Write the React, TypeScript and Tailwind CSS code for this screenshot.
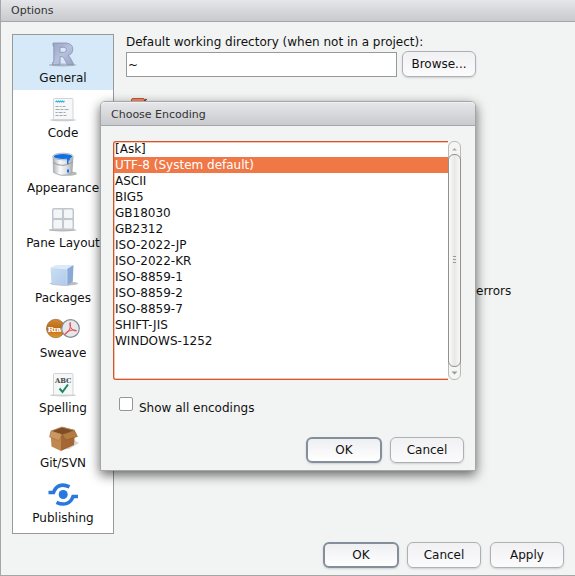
import React from "react";

function RIcon() {
  return (
    <svg width="28" height="28" viewBox="0 0 28 28">
      <defs>
        <linearGradient id="rg" x1="0" y1="0" x2="1" y2="1">
          <stop offset="0" stopColor="#98a5c3" />
          <stop offset="0.5" stopColor="#b8c0dc" />
          <stop offset="1" stopColor="#96a3c4" />
        </linearGradient>
      </defs>
      <ellipse cx="13.500" cy="25" rx="14" ry="1.400" fill="#8b98a8" opacity="0.6" />
      <path
        fillRule="evenodd"
        d="M4 3H16C21 3 23.800 5.300 23.800 9.300C23.800 12.500 22 14.600 19 15.500C20 16 20.700 16.900 21.300 18L25 24.800H18.500L15.300 18.600C14.600 17.200 13.900 16.700 12.500 16.700H11V24.800H3.500V22.500H4.800V6H4ZM11 7.300V12.300H14.500C16.500 12.300 17.300 11.400 17.300 9.700C17.300 8.100 16.500 7.300 14.500 7.300Z"
        fill="url(#rg)"
        stroke="#8390ae"
        strokeWidth="0.8"
      />
    </svg>
  );
}

function CodeIcon() {
  return (
    <svg width="28" height="28" viewBox="0 0 28 28">
      <ellipse cx="14" cy="25" rx="13" ry="1.300" fill="#999" opacity="0.5" />
      <rect x="4.500" y="3.500" width="19.500" height="21" rx="1" fill="#f6f7f8" stroke="#d2d5d8" />
      <path d="M6.500 7l1-1 1 1 1-1 1 1 1-1 1 1 1-1 1 1 1-1" fill="none" stroke="#2eb5df" strokeWidth="1.100" />
      <g stroke="#a5a9ad" strokeWidth="1.100">
        <path d="M6.500 11.500h11" strokeDasharray="3 1 2 1" />
        <path d="M6.500 14.500h13" strokeDasharray="4 1 3 1" />
        <path d="M6.500 17.500h11" strokeDasharray="2 1 4 1" />
        <path d="M6.500 20.500h12" strokeDasharray="3 1 3 1" />
      </g>
    </svg>
  );
}

function BucketIcon() {
  return (
    <svg width="28" height="28" viewBox="0 0 28 28">
      <defs>
        <linearGradient id="bk">
          <stop offset="0" stopColor="#aeb2b5" />
          <stop offset="0.35" stopColor="#fbfbfb" />
          <stop offset="0.7" stopColor="#d9dcde" />
          <stop offset="1" stopColor="#a7abae" />
        </linearGradient>
      </defs>
      <ellipse cx="18" cy="23.500" rx="10" ry="2.300" fill="#888" opacity="0.6" />
      <path d="M4 6.500L4.500 22.500Q14 28 23 22.500L24 6.500Z" fill="url(#bk)" stroke="#a1a5a8" strokeWidth="0.7" />
      <path d="M4 12.500Q14 18.500 24 12" fill="none" stroke="#999da0" strokeWidth="1" />
      <ellipse cx="14" cy="6.500" rx="10.300" ry="3.300" fill="#f2f3f4" stroke="#a4a8ac" strokeWidth="0.8" />
      <ellipse cx="14" cy="6.500" rx="9.300" ry="2.500" fill="#126fe2" />
      <path d="M16.500 7H21.500L20.500 10.500H19.500V14H18V9Z M18 19.500h2v3h-2z" fill="#1472e6" />
    </svg>
  );
}

function PaneIcon() {
  return (
    <svg width="28" height="28" viewBox="0 0 28 28">
      <ellipse cx="13.500" cy="25" rx="14" ry="1.500" fill="#888" opacity="0.6" />
      <rect x="3" y="3" width="22" height="22" rx="2" fill="#c3c9d1" />
      <g fill="#f4f5f6" stroke="#b9c0c9" strokeWidth="0.8">
        <rect x="4" y="4" width="9.500" height="9.500" rx="1.500" />
        <rect x="14.500" y="4" width="9.500" height="9.500" rx="1.500" />
        <rect x="4" y="14.500" width="9.500" height="9.500" rx="1.500" />
        <rect x="14.500" y="14.500" width="9.500" height="9.500" rx="1.500" />
      </g>
    </svg>
  );
}

function PackageIcon() {
  return (
    <svg width="32" height="28" viewBox="0 0 32 28">
      <defs>
        <linearGradient id="pk" x1="0" y1="0" x2="1" y2="1">
          <stop offset="0" stopColor="#cbdff4" />
          <stop offset="1" stopColor="#b0c9ea" />
        </linearGradient>
      </defs>
      <ellipse cx="17" cy="23.500" rx="14" ry="2.200" fill="#888" opacity="0.55" />
      <path d="M3.500 7.500L9 5H26.500L20.500 9Z" fill="#dce9f7" />
      <path d="M3.500 7.500L20 9V26L4.500 24Z" fill="url(#pk)" />
      <path d="M20 9L26.500 5L25.800 21.500L20 26Z" fill="#8aa9d5" />
      <path d="M3.500 7.500L20 9V25.500" fill="none" stroke="#deebf9" strokeWidth="0.6" />
    </svg>
  );
}

function SweaveIcon() {
  return (
    <svg width="34" height="28" viewBox="0 0 34 28">
      <defs>
        <linearGradient id="sw" x1="0" y1="0" x2="0" y2="1">
          <stop offset="0" stopColor="#d08a35" />
          <stop offset="0.5" stopColor="#bf6810" />
          <stop offset="1" stopColor="#e2962d" />
        </linearGradient>
        <clipPath id="sc">
          <circle cx="9.700" cy="13.500" r="9.200" />
        </clipPath>
      </defs>
      <circle cx="9.700" cy="13.500" r="9.200" fill="url(#sw)" stroke="#9c7347" strokeWidth="0.8" />
      <text clipPath="url(#sc)" x="1.500" y="16.500" fontFamily="DejaVu Serif, serif" fontSize="8" fontWeight="bold" letterSpacing="-1" fill="#fff">
        Rnw
      </text>
      <circle cx="24.500" cy="13.500" r="8.800" fill="#e5e7eb" stroke="#838993" strokeWidth="1.200" />
      <path
        d="M24.200 7.500C24.500 11 24.500 12.500 23.200 15C21.800 17.300 20.300 19 18.800 19.300C19 17.800 21.500 16.200 24.500 15.500C27 14.900 29.500 14.800 30.500 15.800C29 16.500 26 14.800 24.800 12.500C24 11 23.700 9 24.200 7.500Z"
        fill="#f0c8cb"
        stroke="#e04a50"
        strokeWidth="1"
      />
    </svg>
  );
}

function SpellingIcon() {
  return (
    <svg width="28" height="28" viewBox="0 0 28 28">
      <ellipse cx="14" cy="25.200" rx="13" ry="1.300" fill="#999" opacity="0.5" />
      <rect x="4.500" y="3.500" width="19.500" height="21.500" rx="1" fill="#f6f7f8" stroke="#d2d5d8" />
      <text x="6" y="12.500" fontFamily="DejaVu Serif, serif" fontSize="6.800" fontWeight="bold" letterSpacing="-0.1" fill="#454b4b">
        ABC
      </text>
      <path d="M10.500 18.500L13.500 22L19 14.500" fill="none" stroke="#168b5c" strokeWidth="2" />
    </svg>
  );
}

function BoxIcon() {
  return (
    <svg width="32" height="28" viewBox="0 0 32 28">
      <path d="M26 14L32 18L22 24L15 24Z" fill="#888" opacity="0.35" />
      <path d="M4 6L15 2L28 5L16.500 10Z" fill="#7f4e27" />
      <path d="M3.500 7L14 10V26L4.500 21.500Z" fill="#c08750" />
      <path d="M14 10L28 5.500L27 20L14 26Z" fill="#a46632" />
      <path d="M4 6L2.500 12L12 15.500L15 9.500Z" fill="#cc9862" stroke="#a46b39" strokeWidth="0.500" />
      <path d="M15 9.500L19 15L30.500 11.500L27.500 5.500Z" fill="#b47b44" stroke="#875426" strokeWidth="0.500" />
      <path d="M4 6L15 2L27.500 5.500" fill="none" stroke="#c28b59" strokeWidth="0.8" />
    </svg>
  );
}

function PublishIcon() {
  return (
    <svg width="32" height="28" viewBox="0 0 32 28">
      <g fill="none" stroke="#2878dd" strokeWidth="3.600">
        <path d="M1.500 12.500H6.500C8.800 5.800 14.500 3 22.500 6.800" />
        <path d="M31 16.500H26C23.700 23.200 17.500 26.200 9.500 22.300" />
      </g>
      <circle cx="16.200" cy="14.500" r="4.500" fill="#2878dd" />
    </svg>
  );
}

const sections = [
  { name: "General", icon: RIcon },
  { name: "Code", icon: CodeIcon },
  { name: "Appearance", icon: BucketIcon },
  { name: "Pane Layout", icon: PaneIcon },
  { name: "Packages", icon: PackageIcon },
  { name: "Sweave", icon: SweaveIcon },
  { name: "Spelling", icon: SpellingIcon },
  { name: "Git/SVN", icon: BoxIcon },
  { name: "Publishing", icon: PublishIcon },
];

const encodings = [
  "[Ask]",
  "UTF-8 (System default)",
  "ASCII",
  "BIG5",
  "GB18030",
  "GB2312",
  "ISO-2022-JP",
  "ISO-2022-KR",
  "ISO-8859-1",
  "ISO-8859-2",
  "ISO-8859-7",
  "SHIFT-JIS",
  "WINDOWS-1252",
];

function Button({ children, primary = false }: { children: React.ReactNode; primary?: boolean }) {
  return (
    <button
      className={
        "flex h-[26px] shrink-0 items-center justify-center rounded-[6px] bg-linear-to-b shadow-[0_1px_2px_rgba(0,0,0,0.15)] " +
        (primary
          ? "w-[76px] border-2 border-[#858e9b] from-[#eeeff2] to-white"
          : "w-[74px] border border-[#adb0b4] from-[#f1f1f4] to-[#fbfbfc]")
      }
    >
      {children}
    </button>
  );
}

function TitleBar({ children, className }: { children: React.ReactNode; className: string }) {
  return (
    <div
      className={
        "flex shrink-0 items-center border-b border-[#a6a6aa] bg-linear-to-b from-[#e5e6e9] to-[#c9cacd] text-[11px] text-[#333] " +
        className
      }
    >
      {children}
    </div>
  );
}

function ScrollBar() {
  return (
    <div className="flex h-[239px] w-[13px] flex-col items-center rounded-[6px] border border-[#bab9b7] bg-[#f5f5f4]">
      <svg width="11" height="12" viewBox="0 0 11 12" className="shrink-0">
        <path d="M3 8.500L5.500 6L8 8.500Z" fill="#aaa" />
      </svg>
      <div className="flex w-[13px] flex-1 flex-col items-center justify-center gap-[2px] rounded-[6px] border border-[#92918f] bg-linear-to-r from-[#fbfbfb] via-[#e8e8e6] to-[#f8f8f8] pb-[3px]">
        <i className="h-px w-[3px] bg-[#999]" />
        <i className="h-px w-[3px] bg-[#999]" />
        <i className="h-px w-[3px] bg-[#999]" />
      </div>
      <svg width="11" height="12" viewBox="0 0 11 12" className="shrink-0">
        <path d="M2.500 4.500H8.500L5.500 7.500Z" fill="#999" />
      </svg>
    </div>
  );
}

function EncodingDialog() {
  return (
    <div className="absolute left-[99px] top-[101px] flex h-[370px] w-[376px] flex-col rounded-t-[5px] border border-[#a6a6aa] bg-[#f2f4f3] shadow-[0_4px_12px_rgba(0,0,0,0.6)]">
      <TitleBar className="h-6 rounded-t-[4px] border-t border-t-[#f0f1f3] pl-[10px] pt-px">Choose Encoding</TitleBar>
      <div className="flex flex-1 flex-col pl-3 pt-[15px]">
        <div className="flex h-[239px]">
          <ul className="w-[335px] rounded-l-[3px] border border-r-0 border-[#d0562c] bg-white shadow-[inset_1px_1px_0_#f7c3ae,inset_0_-1px_0_#f7c3ae]">
            {encodings.map((name, i) => (
              <li
                key={name}
                className={
                  "h-4 pl-px leading-4 " + (i === 1 ? "bg-[#f07746] text-white" : i === 0 ? "-mt-px" : "")
                }
              >
                {name}
              </li>
            ))}
          </ul>
          <ScrollBar />
        </div>
        <label className="mt-[17px] flex pl-[6px]">
          <span className="h-[14px] w-[14px] rounded-[2px] border border-[#989693] bg-white" />
          <span className="ml-[6px] mt-1 leading-[15px]">Show all encodings</span>
        </label>
        <div className="mt-[21px] flex gap-2 pl-[193px]">
          <Button primary>OK</Button>
          <Button>Cancel</Button>
        </div>
      </div>
    </div>
  );
}

export default function App() {
  return (
    <div className="relative flex h-[576px] w-[575px] flex-col overflow-hidden border-b border-l border-[#a6a6aa] bg-[#f2f4f3] font-['DejaVu_Sans',sans-serif] text-[12px] leading-[14px] text-[#111]">
      <TitleBar className="h-[22px] pl-[10px]">Options</TitleBar>
      <div className="flex h-[512px] shrink-0 pl-[11px] pt-3">
        <nav className="h-[500px] w-[102px] shrink-0 border border-[#999] bg-white">
          {sections.map(({ name, icon: Icon }, i) => (
            <div key={name} className={"flex h-[55px] flex-col items-center pt-[5px] " + (i === 0 ? "bg-[#d6e9f8]" : "")}>
              <Icon />
              <span className="mt-[3px] whitespace-nowrap">{name}</span>
            </div>
          ))}
        </nav>
        <main className="ml-3 w-[440px]">
          <div className="pt-px leading-[15px]">Default working directory (when not in a project):</div>
          <div className="mt-px flex gap-[5px]">
            <div className="mt-px h-[25px] w-[271px] border border-[#999] bg-white pl-px leading-[25px]">~</div>
            <Button>Browse...</Button>
          </div>
          <div className="ml-[5px] mt-[21px] h-[14px] w-[14px] rounded-[2px] border border-[#c65331] bg-[#f48d66]">
            <svg width="16" height="12" viewBox="0 0 16 12" className="overflow-visible">
              <path d="M3 5L6 9L14.500 0" fill="none" stroke="#6a4332" strokeWidth="1.500" />
            </svg>
          </div>
          <div className="ml-[350px] mt-[172px]">errors</div>
        </main>
      </div>
      <div className="mt-2 flex pl-[322px]">
        <Button primary>OK</Button>
        <div className="ml-2 flex gap-[9px]">
          <Button>Cancel</Button>
          <Button>Apply</Button>
        </div>
      </div>
      <EncodingDialog />
    </div>
  );
}
